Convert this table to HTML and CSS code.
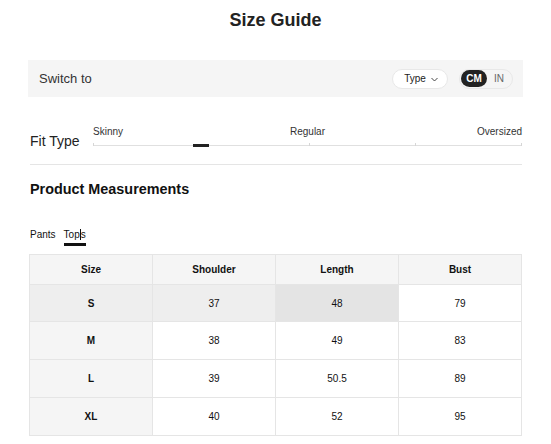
FILE: index.html
```html
<!DOCTYPE html>
<html lang="en">
<head>
<meta charset="utf-8">
<title>Size Guide</title>
<link rel="stylesheet" href="styles.css">
</head>
<body>
<div class="page">
  <h1 class="title">Size Guide</h1>

  <div class="switch-bar">
    <span class="switch-label">Switch to</span>
    <div class="switch-controls">
      <button class="type-pill">Type
        <svg class="chev" width="7" height="5" viewBox="0 0 7 5"><path d="M0.5 1 L3.5 4 L6.5 1" fill="none" stroke="#333" stroke-width="0.9"/></svg>
      </button>
      <div class="unit-toggle">
        <span class="unit active">CM</span>
        <span class="unit">IN</span>
      </div>
    </div>
  </div>

  <div class="fit">
    <div class="fit-label">Fit Type</div>
    <div class="slider">
      <div class="slider-labels">
        <span class="sl-left">Skinny</span>
        <span class="sl-mid">Regular</span>
        <span class="sl-right">Oversized</span>
      </div>
      <div class="track">
        <span class="track-line"></span>
        <span class="tick t0"></span>
        <span class="tick t50"></span>
        <span class="tick t75"></span>
        <span class="tick t100"></span>
        <span class="marker"></span>
      </div>
    </div>
  </div>

  <h2 class="section-title">Product Measurements</h2>

  <div class="tabs">
    <span class="tab">Pants</span>
    <span class="tab active">Top<span class="caret"></span>s</span>
  </div>

  <table class="sizes">
    <thead>
      <tr><th>Size</th><th>Shoulder</th><th>Length</th><th>Bust</th></tr>
    </thead>
    <tbody>
      <tr class="hover"><td class="size">S</td><td>37</td><td class="cell-hover">48</td><td class="plain">79</td></tr>
      <tr><td class="size">M</td><td>38</td><td>49</td><td>83</td></tr>
      <tr><td class="size">L</td><td>39</td><td>50.5</td><td>89</td></tr>
      <tr><td class="size">XL</td><td>40</td><td>52</td><td>95</td></tr>
    </tbody>
  </table>
</div>
</body>
</html>
```

FILE: styles.css
```css
* { box-sizing: border-box; }

body {
  margin: 0;
  background: #fff;
  font-family: "Liberation Sans", Arial, sans-serif;
  color: #222;
}

.page {
  padding: 0 28px;
}

.title {
  margin: 0;
  padding-top: 9px;
  font-size: 18px;
  line-height: 22px;
  font-weight: bold;
  text-align: center;
  color: #222;
}

.switch-bar {
  margin-top: 29px;
  height: 37px;
  background: #f5f5f5;
  display: flex;
  align-items: center;
  justify-content: space-between;
  padding: 0 10px 0 11px;
}

.switch-label {
  font-size: 13px;
  color: #333;
}

.switch-controls {
  display: flex;
  align-items: center;
  gap: 11px;
}

.type-pill {
  width: 56px;
  height: 20px;
  border: 1px solid #e8e8e8;
  border-radius: 10px;
  background: #fff;
  font-family: inherit;
  font-size: 10px;
  color: #222;
  display: flex;
  align-items: center;
  justify-content: center;
  gap: 5px;
  padding: 0 0 0 2px;
}

.chev { display: block; margin-top: 1px; }

.unit-toggle {
  width: 54px;
  height: 20px;
  border: 1px solid #e8e8e8;
  border-radius: 10px;
  background: #f5f5f5;
  display: flex;
  align-items: center;
  padding: 0 1px;
}

.unit {
  font-size: 10px;
  color: #666;
  height: 17px;
  line-height: 17px;
  text-align: center;
}

.unit.active {
  width: 26px;
  border-radius: 9px;
  background: #222;
  color: #fff;
  font-weight: bold;
}

.unit + .unit {
  flex: 1;
}

.fit {
  margin: 0 1px 0 2px;
  padding: 29px 0 15px;
  border-bottom: 1px solid #e5e5e5;
  display: flex;
  align-items: flex-start;
}

.fit-label {
  width: 63px;
  flex: none;
  margin-top: 7px;
  font-size: 14px;
  line-height: 16px;
  color: #222;
}

.slider {
  flex: 1;
}

.slider-labels {
  display: grid;
  grid-template-columns: 1fr auto 1fr;
  font-size: 10px;
  line-height: 12px;
  color: #333;
}

.sl-right { justify-self: end; }

.track {
  position: relative;
  margin-top: 5px;
  height: 5px;
}

.track-line {
  position: absolute;
  left: 0;
  right: 0;
  top: 2px;
  height: 1px;
  background: #e0e0e0;
}

.tick {
  position: absolute;
  top: 0;
  width: 1px;
  height: 3px;
  background: #d6d6d6;
}

.t0 { left: 0; }
.t50 { left: calc(50% + 1px); }
.t75 { left: 75%; }
.t100 { right: 0; }

.marker {
  position: absolute;
  left: 100px;
  top: 1px;
  width: 16px;
  height: 3px;
  background: #222;
}

.section-title {
  margin: 15px 0 0 2px;
  font-size: 14.4px;
  line-height: 18px;
  font-weight: bold;
  color: #111;
}

.tabs {
  margin: 31px 0 0 2px;
  display: flex;
  gap: 8px;
  font-size: 10px;
  line-height: 12px;
  color: #111;
}

.tab {
  padding-bottom: 2px;
  border-bottom: 3px solid transparent;
}

.tab.active {
  border-bottom-color: #111;
}

.caret {
  display: inline-block;
  width: 1px;
  height: 11px;
  background: #111;
  vertical-align: -2px;
}

.sizes {
  margin: 8px 0 0 1px;
  width: 493px;
  border-collapse: collapse;
  table-layout: fixed;
  font-size: 10px;
  color: #111;
}

.sizes th,
.sizes td {
  border: 1px solid #e5e5e5;
  text-align: center;
  padding: 0;
}

.sizes th {
  height: 30px;
  background: #f5f5f5;
  font-weight: bold;
}

.sizes td {
  height: 38px;
  background: #fff;
}

.sizes tr.hover td {
  height: 37px;
}

.sizes td.size {
  background: #f5f5f5;
  font-weight: bold;
}

.sizes tr.hover td {
  background: #eeeeee;
}

.sizes tr.hover td.cell-hover {
  background: #e4e4e4;
}

.sizes tr.hover td.plain {
  background: #fff;
}
```
